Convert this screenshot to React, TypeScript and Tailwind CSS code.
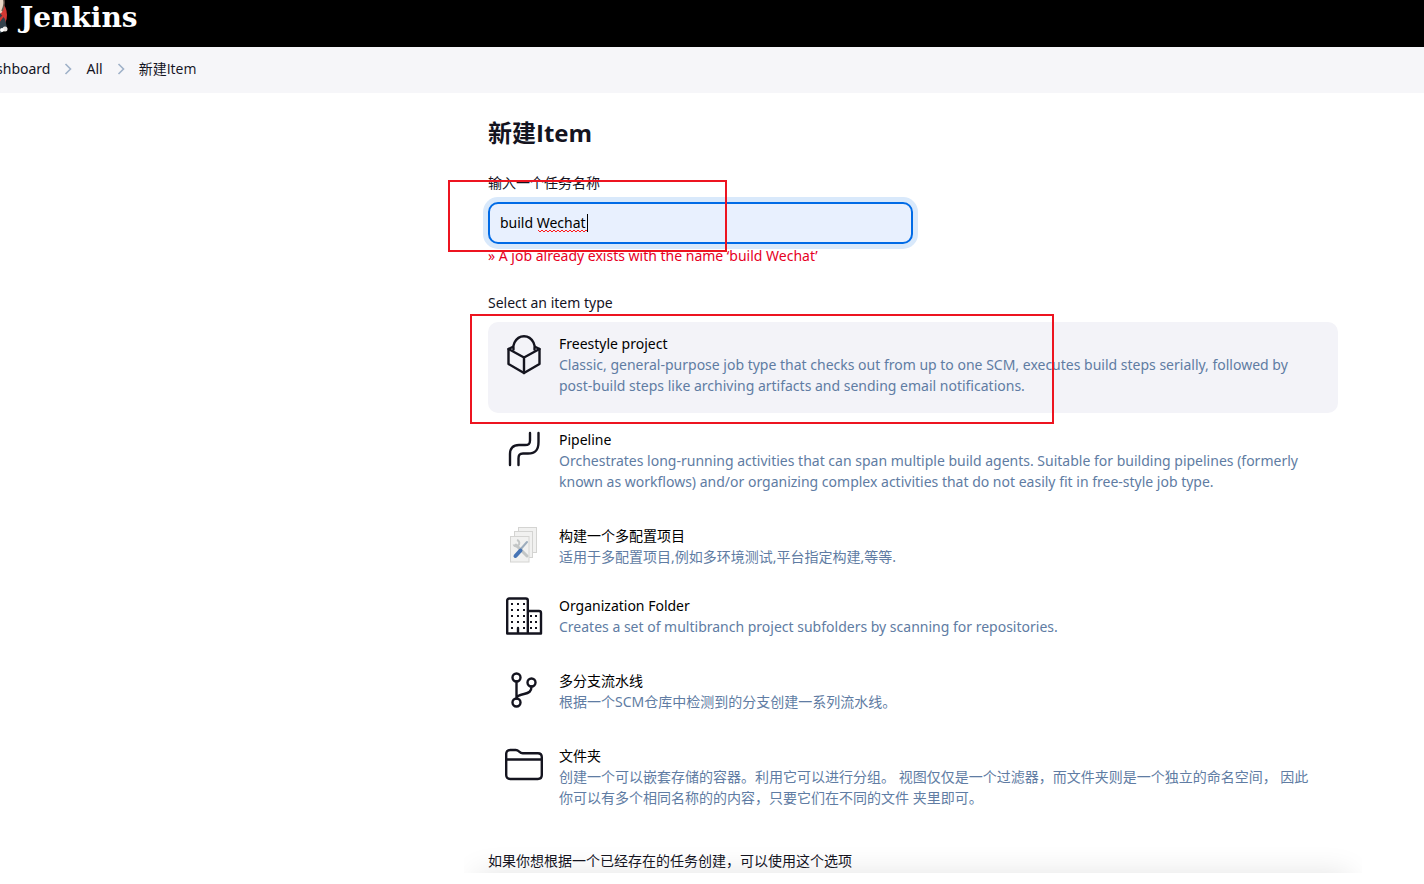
import { useState } from 'react';
import type { ReactNode } from 'react';

function ButlerLogo() {
  return (
    <svg width="34" height="46" viewBox="0 0 34 46" aria-hidden="true" className="shrink-0">
      <circle cx="14" cy="23" r="19" fill="#d33833" />
      <path d="M18 0c8 0 12 4 12 11 0 6-2 11-6 12H14V0z" fill="#e8d5c4" />
      <path d="M29 6c2 3 1 9-1 13" fill="none" stroke="#6b5a50" strokeWidth="1.5" />
      <path d="M14 23l12-2 5 6 2 9-6 5-13 3z" fill="#33414b" />
      <path d="M24 21l2 7 3-4" fill="none" stroke="#d33833" strokeWidth="2" />
      <circle cx="31" cy="37" r="2.5" fill="#e9e6e3" />
      <circle cx="28" cy="38" r="2" fill="#ffffff" />
    </svg>
  );
}

function Chevron() {
  return (
    <svg width="8" height="12" viewBox="0 0 8 12" fill="none" stroke="#9fb1c8" strokeWidth="1.6" aria-hidden="true">
      <path d="M1.5 1L6.5 6l-5 5" />
    </svg>
  );
}

function LineIcon({ children }: { children: ReactNode }) {
  return (
    <svg
      width="38"
      height="38"
      viewBox="0 0 38 38"
      fill="none"
      stroke="#14141f"
      strokeWidth="2.4"
      strokeLinecap="round"
      strokeLinejoin="round"
      aria-hidden="true"
      className="overflow-visible"
    >
      {children}
    </svg>
  );
}

const freestyleIcon = (
  <LineIcon>
    <path d="M8.5 14.500C8 12 8.500 9.500 9.500 7.500 11.500 3.500 15 1.200 19 1.200s7.500 2.300 9.500 6.300c1 2 1.500 4.500 1 7" />
    <path d="M7.500 12l-4 2v15L19 38l15.500-9V14l-4-2" />
    <path d="M3.500 14L19 22.500 34.500 14M19 22.500V38" />
  </LineIcon>
);

const pipelineIcon = (
  <LineIcon>
    <path d="M25 2v7.500c0 3.500-1.500 4.500-5 4.500h-6C8 14 5 17 5 23v11" />
    <path d="M33.500 2v9c0 8-3 11.500-10.500 11.500h-5c-3.500 0-4.500 1.500-4.500 5V34" />
  </LineIcon>
);

const matrixIcon = (
  <svg width="38" height="38" viewBox="0 0 38 38" aria-hidden="true">
    <g fill="#f1f1f0" stroke="#d4d4d2">
      <rect x="13.500" y="0.500" width="18" height="25" />
      <rect x="9.500" y="4.500" width="18" height="26" />
      <rect x="5.500" y="9.500" width="18.500" height="25.500" />
    </g>
    <path d="M11 18l11 11" stroke="#c3c6c6" strokeWidth="3" strokeLinecap="round" />
    <path d="M8.500 17.500c1 2.500 4.500 2.500 5.500 0s-.5-4-2-4.500" fill="none" stroke="#c3c6c6" strokeWidth="2" />
    <path d="M22 15l-7.500 8.500" stroke="#9dadbd" strokeWidth="2" strokeLinecap="round" />
    <path d="M15.500 23.500L10.500 29" stroke="#4674b5" strokeWidth="4" strokeLinecap="round" />
  </svg>
);

const organizationIcon = (
  <LineIcon>
    <path d="M2.200 36.500V3.500c0-1.300.8-2 2-2h16.600c1.300 0 2 .8 2 2v33M23 14h11c1.300 0 2 .8 2 2v20.500H2.200M13 36v-5" />
    <g stroke="none" fill="#14141f">
      {[6, 12, 18, 24, 30].map((y) => (
        <g key={y}>
          <rect x="6" y={y} width="2" height="2" />
          <rect x="12" y={y} width="2" height="2" />
          <rect x="18" y={y} width="2" height="2" />
        </g>
      ))}
      {[18, 24, 30].map((y) => (
        <g key={y}>
          <rect x="25" y={y} width="2" height="2" />
          <rect x="30" y={y} width="2" height="2" />
        </g>
      ))}
    </g>
  </LineIcon>
);

const branchIcon = (
  <LineIcon>
    <circle cx="11.500" cy="5.500" r="4" />
    <circle cx="26.500" cy="10.500" r="4" />
    <circle cx="11.500" cy="30.500" r="4" />
    <path d="M11.500 9.500v17M26.500 14.500c0 5-2.500 6.500-7.500 7.500s-7.500 2-7.500 4.500" />
  </LineIcon>
);

const folderIcon = (
  <LineIcon>
    <path d="M1.200 28V7c0-2.500 1.300-4 4-4h5.500c3.500 0 3.500 3.200 7 3.200h15.100c2.500 0 4 1.500 4 4V28c0 2.500-1.500 4-4 4H5.200c-2.500 0-4-1.500-4-4zM1.200 12.500h35.600" />
  </LineIcon>
);

type ItemType = {
  id: string;
  title: string;
  description: string;
  icon: ReactNode;
  compact?: boolean;
};

const itemTypes: ItemType[] = [
  {
    id: 'freestyle',
    title: 'Freestyle project',
    description:
      'Classic, general-purpose job type that checks out from up to one SCM, executes build steps serially, followed by post-build steps like archiving artifacts and sending email notifications.',
    icon: freestyleIcon,
  },
  {
    id: 'pipeline',
    title: 'Pipeline',
    description:
      'Orchestrates long-running activities that can span multiple build agents. Suitable for building pipelines (formerly known as workflows) and/or organizing complex activities that do not easily fit in free-style job type.',
    icon: pipelineIcon,
  },
  {
    id: 'matrix',
    title: '构建一个多配置项目',
    description: '适用于多配置项目,例如多环境测试,平台指定构建,等等.',
    icon: matrixIcon,
    compact: true,
  },
  {
    id: 'organization',
    title: 'Organization Folder',
    description: 'Creates a set of multibranch project subfolders by scanning for repositories.',
    icon: organizationIcon,
  },
  {
    id: 'multibranch',
    title: '多分支流水线',
    description: '根据一个SCM仓库中检测到的分支创建一系列流水线。',
    icon: branchIcon,
  },
  {
    id: 'folder',
    title: '文件夹',
    description:
      '创建一个可以嵌套存储的容器。利用它可以进行分组。 视图仅仅是一个过滤器，而文件夹则是一个独立的命名空间， 因此你可以有多个相同名称的的内容，只要它们在不同的文件 夹里即可。',
    icon: folderIcon,
  },
];

export default function App() {
  const [name, setName] = useState('build Wechat');
  const [selected, setSelected] = useState('freestyle');

  return (
    <div className="relative overflow-hidden bg-white font-['Noto_Sans','Noto_Sans_CJK_SC',sans-serif] text-sm text-[#14141f]">
      <header className="flex h-[47px] items-start overflow-hidden bg-black">
        <a href="#" className="-ml-[26px] flex items-start gap-3">
          <span className="-mt-2">
            <ButlerLogo />
          </span>
          <span className="font-['DejaVu_Serif',serif] text-[28px] leading-9 font-bold text-white">Jenkins</span>
        </a>
      </header>

      <nav aria-label="Breadcrumb" className="h-[46px] bg-[#f6f6f9]">
        <ol className="-ml-[22px] flex h-11 items-center gap-[14px]">
          <li><a href="#">Dashboard</a></li>
          <li><Chevron /></li>
          <li><a href="#">All</a></li>
          <li><Chevron /></li>
          <li><a href="#" className="font-['Open_Sans','Noto_Sans_CJK_SC',sans-serif]">新建Item</a></li>
        </ol>
      </nav>

      <main className="mr-6 ml-[488px] max-w-[850px] pt-6">
        <h1 className="font-['Open_Sans','Noto_Sans_CJK_SC',sans-serif] text-2xl leading-8 font-bold">新建Item</h1>

        <div className="relative mt-6">
          <label htmlFor="name" className="block leading-5">输入一个任务名称</label>
          <div className="relative mt-[9px] w-1/2">
            <input
              id="name"
              type="text"
              spellCheck={false}
              value={name}
              onChange={(e) => setName(e.target.value)}
              className="block h-[42px] w-full rounded-[10px] border-2 border-[#006be6] bg-[#e8f0fe] px-[10px] pb-[2px] text-black ring-5 ring-[#d9e9fb] outline-none"
            />
            <svg width="50" height="4" viewBox="0 0 50 4" className="absolute top-[27px] left-[50px]" aria-hidden="true">
              <path
                d="M0 1l2 2 2-2 2 2 2-2 2 2 2-2 2 2 2-2 2 2 2-2 2 2 2-2 2 2 2-2 2 2 2-2 2 2 2-2 2 2 2-2 2 2 2-2 2 2 2-2 2 2"
                fill="none"
                stroke="#ff1a1a"
              />
            </svg>
            <span className="absolute top-3 left-[99px] h-[18px] w-px bg-black" />
          </div>
          <p className="mt-[2px] leading-5 text-[#e6001f]">» A job already exists with the name ‘build Wechat’</p>
          <div className="pointer-events-none absolute top-[7px] -left-10 h-[72px] w-[279px] border-2 border-[#ed1420]" />
        </div>

        <fieldset className="relative mt-[27px]">
          <legend className="leading-5">Select an item type</legend>
          <div className="mt-[9px] flex flex-col gap-[5px]">
            {itemTypes.map((item) => (
              <label
                key={item.id}
                className={`flex cursor-pointer gap-4 rounded-[10px] px-[17px] pt-[11px] ${
                  item.compact ? 'pb-3' : 'pb-[17px]'
                } ${selected === item.id ? 'bg-[#f3f3f8]' : 'bg-white'}`}
              >
                <input
                  type="radio"
                  name="mode"
                  value={item.id}
                  checked={selected === item.id}
                  onChange={() => setSelected(item.id)}
                  className="sr-only"
                />
                <span className="shrink-0 pt-[2px]">{item.icon}</span>
                <span className="leading-[21px]">
                  <span className="block text-black">{item.title}</span>
                  <span className="block text-[#607ca3]">{item.description}</span>
                </span>
              </label>
            ))}
          </div>
          <div className="pointer-events-none absolute top-[1px] -left-[18px] h-[110px] w-[584px] border-2 border-[#ed1420]" />
        </fieldset>
      </main>

      <footer className="ml-[464px] max-w-[898px] pb-[11px]">
        <div className="relative overflow-hidden px-6 pt-[26px] pb-[2px]">
          <div className="absolute inset-x-3 top-full h-10 shadow-[0_0_30px_rgba(0,0,0,0.11)]" />
          <p className="relative leading-5">如果你想根据一个已经存在的任务创建，可以使用这个选项</p>
        </div>
      </footer>
    </div>
  );
}
